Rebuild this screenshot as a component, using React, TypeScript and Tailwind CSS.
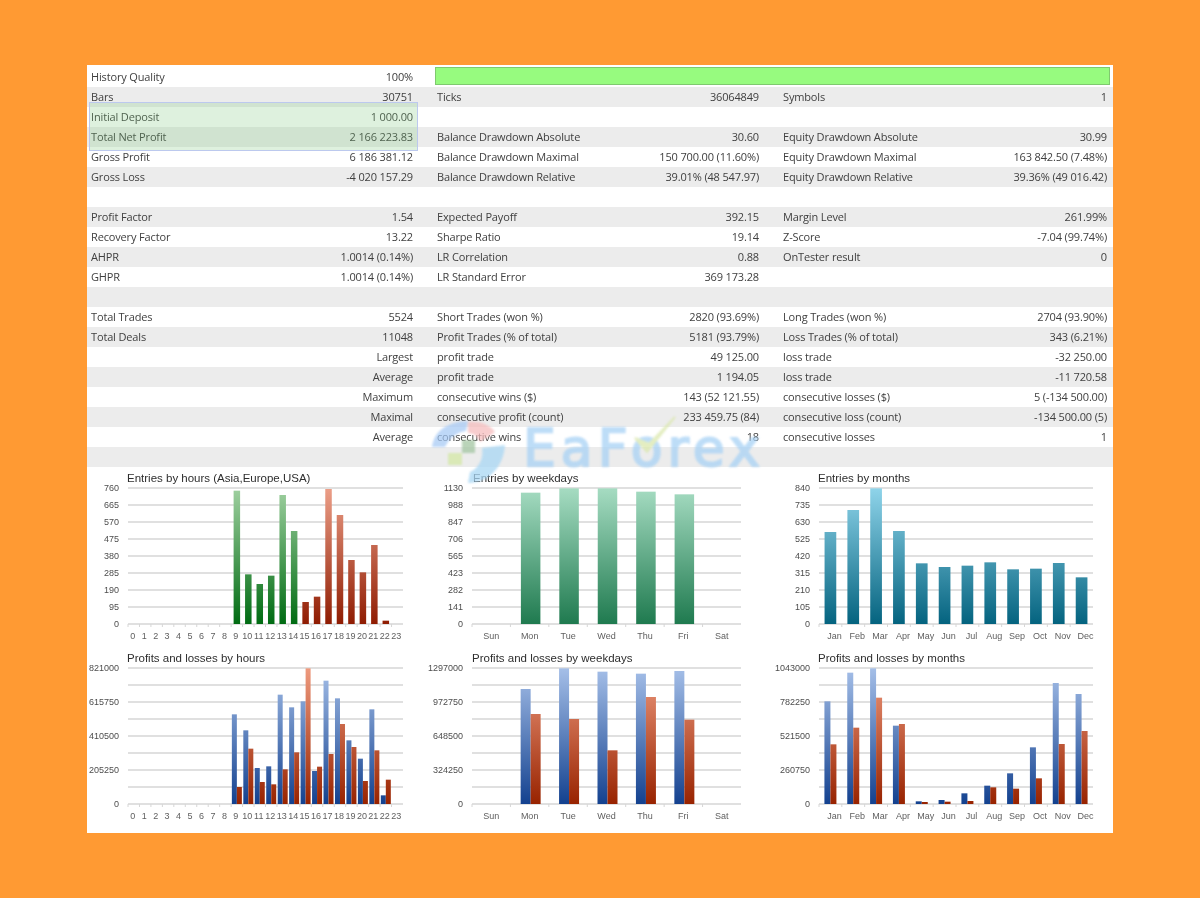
type Cell = [string, string] | null
type Row = { cells: [Cell, Cell, Cell]; gray: boolean; progress?: boolean }

const rows: Row[] = [
  { cells: [['History Quality', '100%'], null, null], gray: false, progress: true },
  { cells: [['Bars', '30751'], ['Ticks', '36064849'], ['Symbols', '1']], gray: true },
  { cells: [['Initial Deposit', '1 000.00'], null, null], gray: false },
  { cells: [['Total Net Profit', '2 166 223.83'], ['Balance Drawdown Absolute', '30.60'], ['Equity Drawdown Absolute', '30.99']], gray: true },
  { cells: [['Gross Profit', '6 186 381.12'], ['Balance Drawdown Maximal', '150 700.00 (11.60%)'], ['Equity Drawdown Maximal', '163 842.50 (7.48%)']], gray: false },
  { cells: [['Gross Loss', '-4 020 157.29'], ['Balance Drawdown Relative', '39.01% (48 547.97)'], ['Equity Drawdown Relative', '39.36% (49 016.42)']], gray: true },
  { cells: [null, null, null], gray: false },
  { cells: [['Profit Factor', '1.54'], ['Expected Payoff', '392.15'], ['Margin Level', '261.99%']], gray: true },
  { cells: [['Recovery Factor', '13.22'], ['Sharpe Ratio', '19.14'], ['Z-Score', '-7.04 (99.74%)']], gray: false },
  { cells: [['AHPR', '1.0014 (0.14%)'], ['LR Correlation', '0.88'], ['OnTester result', '0']], gray: true },
  { cells: [['GHPR', '1.0014 (0.14%)'], ['LR Standard Error', '369 173.28'], null], gray: false },
  { cells: [null, null, null], gray: true },
  { cells: [['Total Trades', '5524'], ['Short Trades (won %)', '2820 (93.69%)'], ['Long Trades (won %)', '2704 (93.90%)']], gray: false },
  { cells: [['Total Deals', '11048'], ['Profit Trades (% of total)', '5181 (93.79%)'], ['Loss Trades (% of total)', '343 (6.21%)']], gray: true },
  { cells: [['', 'Largest'], ['profit trade', '49 125.00'], ['loss trade', '-32 250.00']], gray: false },
  { cells: [['', 'Average'], ['profit trade', '1 194.05'], ['loss trade', '-11 720.58']], gray: true },
  { cells: [['', 'Maximum'], ['consecutive wins ($)', '143 (52 121.55)'], ['consecutive losses ($)', '5 (-134 500.00)']], gray: false },
  { cells: [['', 'Maximal'], ['consecutive profit (count)', '233 459.75 (84)'], ['consecutive loss (count)', '-134 500.00 (5)']], gray: true },
  { cells: [['', 'Average'], ['consecutive wins', '18'], ['consecutive losses', '1']], gray: false },
  { cells: [null, null, null], gray: true },
]

const hours = Array.from({ length: 24 }, (_, i) => String(i))
const days = ['Sun', 'Mon', 'Tue', 'Wed', 'Thu', 'Fri', 'Sat']
const months = ['Jan', 'Feb', 'Mar', 'Apr', 'May', 'Jun', 'Jul', 'Aug', 'Sep', 'Oct', 'Nov', 'Dec']

type Bar = { cat: number; top: number; fill: string; second?: boolean }

type ChartProps = {
  id: string
  title: string
  titleX: number
  left: number
  right: number
  width: number
  yLabels: string[]
  xLabels: string[]
  barWidth: number
  bars: Bar[]
  paired?: boolean
  barShift?: number
  labelShift?: number
}

// tops are measured in px from the chart's top edge, plot runs 18..154
function Chart({ id, title, titleX, left, right, width, yLabels, xLabels, barWidth, bars, paired, barShift = 0, labelShift = 0 }: ChartProps) {
  const top = 18
  const bottom = 154
  const step = (right - left) / xLabels.length
  return (
    <svg width={width} height={180} viewBox={`0 0 ${width} 180`} className="block overflow-visible blur-[0.6px]" fontFamily="'Liberation Sans', sans-serif">
      <defs>
        <linearGradient id={`${id}-green`} gradientUnits="userSpaceOnUse" x1="0" y1={top} x2="0" y2={bottom}>
          <stop offset="0" stopColor="#9fd0a0" />
          <stop offset="1" stopColor="#006b12" />
        </linearGradient>
        <linearGradient id={`${id}-red`} gradientUnits="userSpaceOnUse" x1="0" y1={top} x2="0" y2={bottom}>
          <stop offset="0" stopColor="#ec9f88" />
          <stop offset="1" stopColor="#8f1c02" />
        </linearGradient>
        <linearGradient id={`${id}-sea`} gradientUnits="userSpaceOnUse" x1="0" y1={top} x2="0" y2={bottom}>
          <stop offset="0" stopColor="#a6dcc2" />
          <stop offset="1" stopColor="#1f7a4f" />
        </linearGradient>
        <linearGradient id={`${id}-teal`} gradientUnits="userSpaceOnUse" x1="0" y1={top} x2="0" y2={bottom}>
          <stop offset="0" stopColor="#8fd4ea" />
          <stop offset="1" stopColor="#04637f" />
        </linearGradient>
        <linearGradient id={`${id}-blue`} gradientUnits="userSpaceOnUse" x1="0" y1={top} x2="0" y2={bottom}>
          <stop offset="0" stopColor="#a5bfe8" />
          <stop offset="1" stopColor="#13418f" />
        </linearGradient>
        <linearGradient id={`${id}-orange`} gradientUnits="userSpaceOnUse" x1="0" y1={top} x2="0" y2={bottom}>
          <stop offset="0" stopColor="#ee9a7e" />
          <stop offset="1" stopColor="#982300" />
        </linearGradient>
      </defs>
      <text x={titleX} y={12} fontSize="11.5" fill="#2e2e2e">{title}</text>
      {Array.from({ length: 9 }, (_, i) => {
        const y = top + (i * (bottom - top)) / 8
        return <line key={i} x1={left} x2={right} y1={y} y2={y} stroke="#d6d6d6" strokeWidth="1.4" />
      })}
      {yLabels.map((label, i) => {
        if (!label) return null
        const y = top + (i * (bottom - top)) / 8
        return (
          <text key={i} x={left - 9} y={y + 3} fontSize="9" textAnchor="end" fill="#4d4d4d">{label}</text>
        )
      })}
      {xLabels.map((label, i) => (
        <g key={i}>
          <line x1={left + i * step} x2={left + i * step} y1={bottom} y2={bottom + 3} stroke="#d6d6d6" />
          <text x={left + (i + 0.5) * step + labelShift} y={bottom + 15} fontSize="9" textAnchor="middle" fill="#606060">{label}</text>
        </g>
      ))}
      {bars.map((b, i) => {
        const center = left + (b.cat + 0.5) * step + barShift
        const x = paired ? (b.second ? center : center - barWidth) : center - barWidth / 2
        return <rect key={i} x={x} y={b.top} width={barWidth} height={bottom - b.top} fill={`url(#${id}-${b.fill})`} />
      })}
    </svg>
  )
}

// zoom readings: y on the 3x crop, converted to chart px
const single = (tops: [number, number][], fill: (cat: number) => string): Bar[] =>
  tops.map(([cat, t]) => ({ cat, top: t / 3, fill: fill(cat) }))

const pairs = (tops: [number, number, number][]): Bar[] =>
  tops.flatMap(([cat, a, b]) => [
    { cat, top: a / 3, fill: 'blue' },
    { cat, top: b / 3, fill: 'orange', second: true },
  ])

const entriesHours = single(
  [[9, 62], [10, 313], [11, 342], [12, 317], [13, 75], [14, 183], [15, 396], [16, 380], [17, 57], [18, 135], [19, 270], [20, 307], [21, 225], [22, 452]],
  (c) => (c < 15 ? 'green' : 'red'),
)
const entriesDays = single([[1, 68], [2, 55], [3, 55], [4, 65], [5, 73]], () => 'sea')
const entriesMonths = single(
  [[0, 186], [1, 120], [2, 55], [3, 183], [4, 280], [5, 291], [6, 287], [7, 277], [8, 298], [9, 296], [10, 279], [11, 322]],
  () => 'teal',
)
const plHours = pairs([
  [9, 193, 411], [10, 241, 296], [11, 354, 396], [12, 349, 403], [13, 134, 358], [14, 172, 307], [15, 154, 55],
  [16, 363, 350], [17, 92, 312], [18, 145, 222], [19, 271, 291], [20, 326, 393], [21, 178, 301], [22, 436, 389],
])
const plDays = pairs([[1, 117, 192], [2, 55, 207], [3, 65, 301], [4, 71, 141], [5, 63, 209]])
const plMonths = pairs([
  [0, 154, 283], [1, 68, 233], [2, 55, 143], [3, 227, 222], [4, 454, 456], [5, 450, 455],
  [6, 430, 453], [7, 407, 412], [8, 370, 416], [9, 292, 385], [10, 99, 282], [11, 132, 243],
])

function StatCell({ cell }: { cell: Cell }) {
  if (!cell) return <div />
  return (
    <div className="flex items-center justify-between whitespace-nowrap">
      <span>{cell[0]}</span>
      <span>{cell[1]}</span>
    </div>
  )
}

function Watermark() {
  return (
    <div className="absolute left-[345px] top-[350px] h-[75px] w-[345px] opacity-75 blur-[0.8px] pointer-events-none">
      <svg width="80" height="75" viewBox="0 0 80 75" className="absolute left-0 top-0">
        <path d="M0 32 C2 18 12 7 36 6 L34 16 C24 17 17 24 13 32 Z" fill="#a4c8f4" opacity="0.95" />
        <path d="M36 7 C46 6 58 9 63 17 L48 27 C46 22 42 18 36 18 Z" fill="#f6b9bb" opacity="0.95" />
        <rect x="30" y="25" width="13" height="13" fill="#a3c6a2" />
        <rect x="16" y="38" width="14" height="12" fill="#d4e8a6" />
        <path d="M50 33 L73 30 C72 48 60 68 36 68 L38 57 C46 54 52 44 50 33 Z" fill="#a9d7f4" />
      </svg>
      <span className="absolute left-[91px] top-[3px] font-['DejaVu_Sans',sans-serif] text-[52px] leading-[60px] font-normal tracking-[5px] text-[#a8d2f5] [-webkit-text-stroke:2px_#a8d2f5]">
        EaForex
      </span>
      <svg width="60" height="50" viewBox="0 0 60 50" className="absolute left-[200px] top-[-1px]">
        <path d="M3 24 L15 38 L43 3 L17 30 Z" fill="#dbe8ad" stroke="#dbe8ad" strokeWidth="2" />
      </svg>
    </div>
  )
}

export default function App() {
  return (
    <div className="h-[898px] w-[1200px] bg-[#ff9a33] pt-[65px] pl-[87px] overflow-hidden">
      <div className="relative h-[768px] w-[1026px] bg-white pt-[2px]">
        <div className="font-['Open_Sans',sans-serif] text-[11px] tracking-[-0.15px] text-[#404040] blur-[0.5px]">
          {rows.map((row, i) => (
            <div
              key={i}
              className={`grid h-[20px] grid-cols-[322px_322px_324px] gap-x-6 pl-1 pr-1.5 ${row.gray ? 'bg-[#ececec]' : 'bg-white'}`}
            >
              <StatCell cell={row.cells[0]} />
              {row.progress ? (
                <div className="col-span-2 -ml-[2px] mr-[-3px] mb-[2px] border border-[#7fc96f] bg-[#97fb7f]" />
              ) : (
                <>
                  <StatCell cell={row.cells[1]} />
                  <StatCell cell={row.cells[2]} />
                </>
              )}
            </div>
          ))}
        </div>

        <div className="mt-[3px] grid grid-cols-[343px_350px_333px]">
          <Chart id="a" title="Entries by hours (Asia,Europe,USA)" titleX={40} left={41} right={316} width={343} yLabels={['760', '665', '570', '475', '380', '285', '190', '95', '0']} xLabels={hours} barWidth={6.5} bars={entriesHours} labelShift={-1} />
          <Chart id="b" title="Entries by weekdays" titleX={43} left={42} right={311} width={350} yLabels={['1130', '988', '847', '706', '565', '423', '282', '141', '0']} xLabels={days} barWidth={19.5} bars={entriesDays} barShift={1} />
          <Chart id="c" title="Entries by months" titleX={38} left={39} right={313} width={333} yLabels={['840', '735', '630', '525', '420', '315', '210', '105', '0']} xLabels={months} barWidth={11.7} bars={entriesMonths} labelShift={4} />
          <Chart id="d" title="Profits and losses by hours" titleX={40} left={41} right={316} width={343} yLabels={['821000', '', '615750', '', '410500', '', '205250', '', '0']} xLabels={hours} barWidth={5} bars={plHours} paired labelShift={-1} />
          <Chart id="e" title="Profits and losses by weekdays" titleX={42} left={42} right={311} width={350} yLabels={['1297000', '', '972750', '', '648500', '', '324250', '', '0']} xLabels={days} barWidth={10} bars={plDays} paired barShift={1} />
          <Chart id="f" title="Profits and losses by months" titleX={38} left={39} right={313} width={333} yLabels={['1043000', '', '782250', '', '521500', '', '260750', '', '0']} xLabels={months} barWidth={6} bars={plMonths} paired labelShift={4} />
        </div>

        {/* highlight over Initial Deposit / Total Net Profit */}
        <div className="absolute left-[2px] top-[37px] h-[49px] w-[329px] border-[1.5px] border-[#bcc9ee] bg-[#7cc97c]/25 blur-[0.4px]" />
        <Watermark />
      </div>
    </div>
  )
}
